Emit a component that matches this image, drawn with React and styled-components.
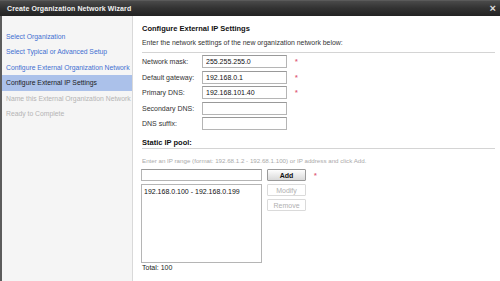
import React from 'react'
import styled, { createGlobalStyle } from 'styled-components'

const GlobalStyle = createGlobalStyle`
  html, body {
    margin: 0;
    padding: 0;
    background: #fff;
  }
  body {
    font-family: "Liberation Sans", Arial, sans-serif;
  }
`

const steps = [
  { label: 'Select Organization', state: 'done' },
  { label: 'Select Typical or Advanced Setup', state: 'done' },
  { label: 'Configure External Organization Network', state: 'done' },
  { label: 'Configure External IP Settings', state: 'current' },
  { label: 'Name this External Organization Network', state: 'todo' },
  { label: 'Ready to Complete', state: 'todo' },
]

const fields = [
  { label: 'Network mask:', value: '255.255.255.0', required: true },
  { label: 'Default gateway:', value: '192.168.0.1', required: true },
  { label: 'Primary DNS:', value: '192.168.101.40', required: true },
  { label: 'Secondary DNS:', value: '', required: false },
  { label: 'DNS suffix:', value: '', required: false },
]

function App() {
  return (
    <>
      <GlobalStyle />
      <Dialog>
        <TitleBar>
          <Title>Create Organization Network Wizard</Title>
          <Close>×</Close>
        </TitleBar>
        <Body>
          <Sidebar>
            {steps.map(s => (
              <Step key={s.label} state={s.state}>{s.label}</Step>
            ))}
          </Sidebar>
          <Content>
            <Heading>Configure External IP Settings</Heading>
            <Intro>Enter the network settings of the new organization network below:</Intro>
            <Rule />
            <Form>
              {fields.map(f => (
                <FieldRow key={f.label}>
                  <Label>{f.label}</Label>
                  <TextBox defaultValue={f.value} />
                  {f.required && <Star>*</Star>}
                </FieldRow>
              ))}
            </Form>
            <SubHeading>Static IP pool:</SubHeading>
            <SubRule />
            <Hint>Enter an IP range (format: 192.68.1.2 - 192.68.1.100) or IP address and click Add.</Hint>
            <Pool>
              <PoolLeft>
                <PoolInput />
                <ListBox>
                  <ListItem>192.168.0.100 - 192.168.0.199</ListItem>
                </ListBox>
              </PoolLeft>
              <Buttons>
                <ButtonRow>
                  <Button>Add</Button>
                  <Star>*</Star>
                </ButtonRow>
                <Button disabled>Modify</Button>
                <Button disabled>Remove</Button>
              </Buttons>
            </Pool>
            <Total>Total: 100</Total>
          </Content>
        </Body>
      </Dialog>
    </>
  )
}

const Dialog = styled.div`
  width: 500px;
  height: 281px;
  display: flex;
  flex-direction: column;
  overflow: hidden;
  background: #fff;
`

const TitleBar = styled.div`
  height: 16px;
  flex: none;
  display: flex;
  align-items: center;
  justify-content: space-between;
  padding: 0 4px 0 7px;
  background: linear-gradient(#6a6a6a 0, #4a4a4a 1px, #333 50%, #222 100%);
`

const Title = styled.div`
  color: #f2f2f2;
  font-size: 7px;
  font-weight: bold;
  letter-spacing: 0.1px;
`

const Close = styled.div`
  color: #ddd;
  font-size: 11px;
  font-weight: bold;
  line-height: 1;
`

const Body = styled.div`
  flex: 1;
  display: flex;
  min-height: 0;
`

const Sidebar = styled.div`
  width: 130px;
  flex: none;
  background: #f5f5f5;
  border-left: 2px solid #5c5c5c;
  border-right: 1px solid #d9d9d9;
  padding-top: 13px;
  display: flex;
  flex-direction: column;
`

const Step = styled.div`
  height: 15.4px;
  line-height: 15.4px;
  padding-left: 4px;
  font-size: 6.8px;
  white-space: nowrap;
  color: ${p => (p.state === 'done' ? '#3f6fd1' : p.state === 'current' ? '#1c1c1c' : '#b4b4b4')};
  background: ${p => (p.state === 'current' ? '#abc1ea' : 'transparent')};
`

const Content = styled.div`
  flex: 1;
  padding: 8px 5px 0 9px;
  display: flex;
  flex-direction: column;
  color: #222;
`

const Heading = styled.div`
  font-size: 7.5px;
  font-weight: bold;
  line-height: 10px;
  color: #111;
`

const Intro = styled.div`
  margin-top: 4px;
  font-size: 6.9px;
  line-height: 10px;
  color: #333;
`

const Rule = styled.div`
  height: 1px;
  background: #d4d4d4;
  margin-top: 4px;
`

const SubRule = styled(Rule)`
  margin-top: 0;
`

const Form = styled.div`
  margin-top: 2px;
  display: flex;
  flex-direction: column;
  gap: 2.5px;
`

const FieldRow = styled.div`
  display: flex;
  align-items: center;
  height: 13px;
`

const Label = styled.div`
  width: 60px;
  font-size: 7px;
  color: #333;
`

const TextBox = styled.input`
  box-sizing: border-box;
  width: 85px;
  height: 13px;
  margin: 0;
  padding: 0 3px;
  border: 1px solid #b5b5b5;
  border-top-color: #999;
  font-family: "Liberation Sans", Arial, sans-serif;
  font-size: 7px;
  color: #111;
  background: #fff;
  outline: none;
`

const Star = styled.span`
  margin-left: 8px;
  color: #e0607a;
  font-size: 7px;
  font-weight: bold;
`

const SubHeading = styled(Heading)`
  margin-top: 8px;
`

const Hint = styled.div`
  margin-top: 8px;
  font-size: 6.2px;
  line-height: 8px;
  color: #aaa;
  white-space: nowrap;
`

const Pool = styled.div`
  margin-top: 4px;
  display: flex;
  gap: 5px;
`

const PoolLeft = styled.div`
  display: flex;
  flex-direction: column;
  gap: 3px;
`

const PoolInput = styled.input`
  box-sizing: border-box;
  width: 121px;
  height: 12px;
  margin: 0 0 0 -1px;
  border: 1px solid #b5b5b5;
  border-top-color: #999;
  background: #fff;
  outline: none;
`

const ListBox = styled.div`
  box-sizing: border-box;
  width: 121px;
  height: 79px;
  margin-left: -1px;
  border: 1px solid #b5b5b5;
  padding: 2px 2px;
`

const ListItem = styled.div`
  font-size: 7px;
  line-height: 9px;
  color: #111;
`

const Buttons = styled.div`
  display: flex;
  flex-direction: column;
  gap: 3px;
`

const ButtonRow = styled.div`
  display: flex;
  align-items: center;
`

const Button = styled.button`
  box-sizing: border-box;
  width: 39px;
  height: 12px;
  margin: 0;
  padding: 0;
  font-family: "Liberation Sans", Arial, sans-serif;
  font-size: 7px;
  font-weight: ${p => (p.disabled ? 'normal' : 'bold')};
  color: ${p => (p.disabled ? '#b0b0b0' : '#111')};
  border: 1px solid ${p => (p.disabled ? '#dadada' : '#9a9a9a')};
  border-radius: 1px;
  background: ${p => (p.disabled ? '#fff' : 'linear-gradient(#fdfdfd, #d9d9d9)')};
`

const Total = styled.div`
  margin-top: 1px;
  font-size: 7px;
  line-height: 8px;
  color: #222;
`

export default App
